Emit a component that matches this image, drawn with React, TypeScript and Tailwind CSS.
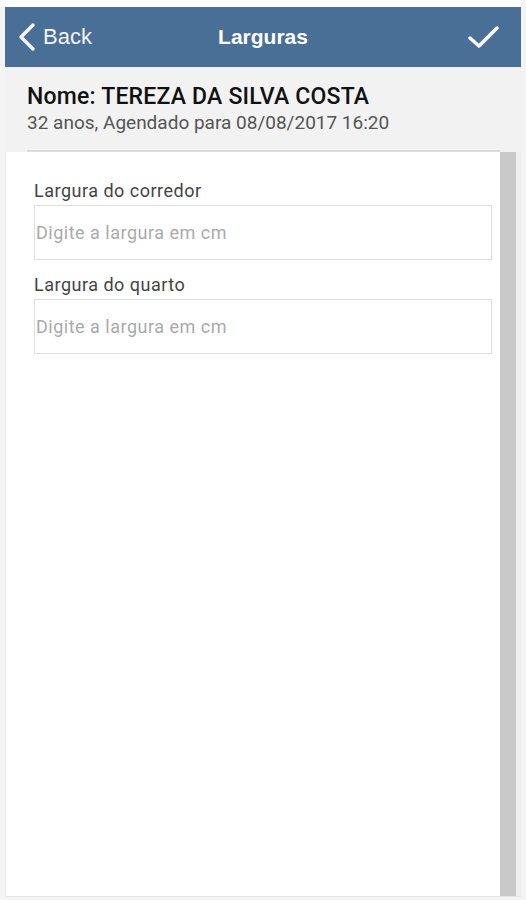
import React from 'react';

const fields = [
  { label: 'Largura do corredor', placeholder: 'Digite a largura em cm' },
  { label: 'Largura do quarto', placeholder: 'Digite a largura em cm' },
];

const App: React.FC = () => {
  return (
    <div className="w-[526px] h-[900px] bg-[#f4f4f4] flex flex-col font-['Roboto',sans-serif]">
      <div className="h-[7px] bg-white shrink-0 mr-[5px]"></div>

      {/* Header */}
      <div className="ml-[5px] mr-[5px] h-[60px] shrink-0 bg-[#4a6f96] flex items-center justify-between relative">
        <div className="flex items-center pl-[11px] gap-[5px] text-[#f2f5f9]">
          <svg width="22" height="30" viewBox="0 0 22 30">
            <polyline points="17,3 5,15 17,27" fill="none" stroke="currentColor" strokeWidth="3.5" strokeLinecap="round" strokeLinejoin="round" />
          </svg>
          <span className="text-[22px] font-['Liberation_Sans',sans-serif] leading-none">Back</span>
        </div>
        <span className="absolute left-1/2 -translate-x-1/2 text-white text-[21px] font-bold font-['Liberation_Sans',sans-serif]">
          Larguras
        </span>
        <svg width="40" height="30" viewBox="0 0 40 30" className="mr-[16px] text-white">
          <polyline points="5,16 14,24 32,6" fill="none" stroke="currentColor" strokeWidth="3.5" strokeLinecap="round" strokeLinejoin="round" />
        </svg>
      </div>

      {/* Patient info */}
      <div className="ml-[5px] mr-[5px] h-[85px] shrink-0 bg-[#f2f2f2] flex flex-col">
        <div className="px-[22px] pt-[16px] flex-1">
          <p className="text-[23px] tracking-[0.2px] font-medium text-[#111] leading-[28px]">Nome: TEREZA DA SILVA COSTA</p>
          <p className="text-[19px] text-[#555] leading-[24px]">32 anos, Agendado para 08/08/2017 16:20</p>
        </div>
        <div className="ml-[22px] mr-[21px] h-[2px] bg-[#dcdcdc]"></div>
      </div>

      {/* Content */}
      <div className="flex-1 flex ml-[5px] mr-[5px] mb-[3px] border-b border-[#e2e2e2]">
        <div className="flex-1 bg-white border-l border-[#ececec] pl-[28px] pr-[8px] pt-[28px] flex flex-col gap-[14px]">
          {fields.map(f => (
            <div key={f.label} className="flex flex-col">
              <label className="text-[18px] tracking-[0.5px] text-[#444] leading-[21px] mb-[4px]">{f.label}</label>
              <div className="h-[55px] border border-[#dedede] flex items-center pl-[1px]">
                <span className="text-[18px] tracking-[0.5px] text-[#aaa]">{f.placeholder}</span>
              </div>
            </div>
          ))}
        </div>
        <div className="w-[16px] bg-[#c9c9c9] shrink-0"></div>
        <div className="w-[5px] bg-[#f0f0f0] shrink-0"></div>
      </div>
    </div>
  );
};

export default App;
